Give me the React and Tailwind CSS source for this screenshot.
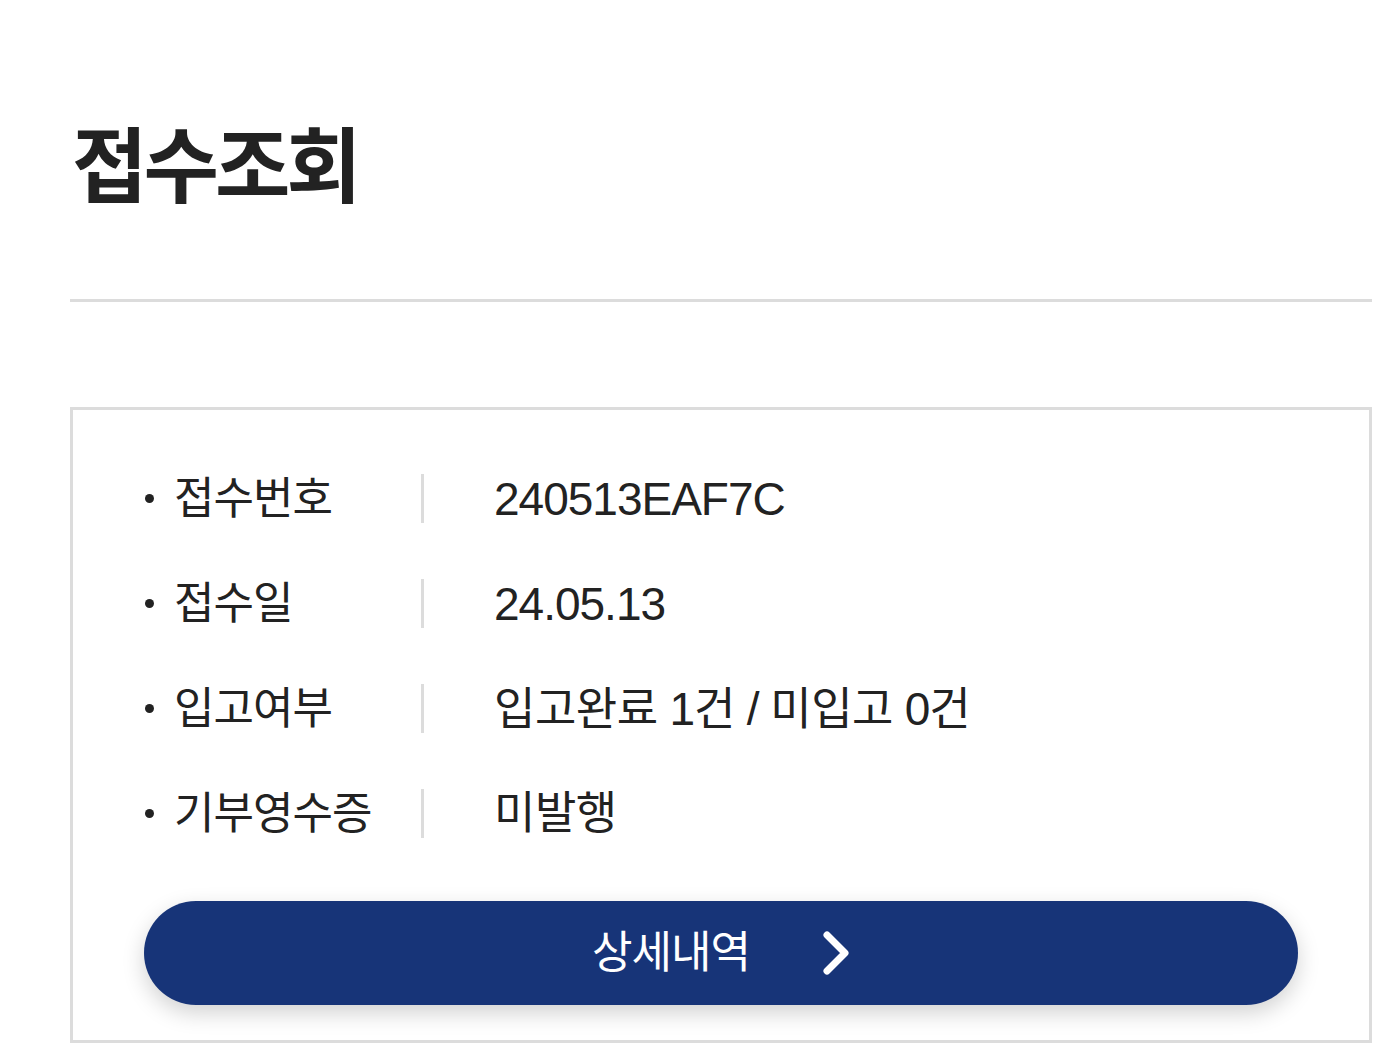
import React from 'react';

const KO = /([\u1100-\u11FF\u3130-\u318F\uAC00-\uD7AF]+)/;

// Hangul and latin parts get their own size so both match the picture
const Mixed = ({ text }) => (
  <span className="flex items-baseline">
    {text.split(KO).filter(Boolean).map((part, i) =>
      KO.test(part) ? (
        <span key={i} className="text-[45px] tracking-[-0.5px]">{part}</span>
      ) : (
        <span key={i} className="text-[46px] tracking-[-1px] whitespace-pre">{part}</span>
      )
    )}
  </span>
);

const rows = [
  { label: '접수번호', value: '240513EAF7C' },
  { label: '접수일', value: '24.05.13' },
  { label: '입고여부', value: '입고완료 1건 / 미입고 0건' },
  { label: '기부영수증', value: '미발행' },
];

const InfoRow = ({ label, value }) => (
  <div className="flex items-center h-[105px] leading-none text-[#222]">
    <span className="ml-px w-[9px] h-[9px] rounded-full bg-[#222]" />
    <span className="ml-[20px] w-[247px] text-[44px] tracking-[-1px]">{label}</span>
    <span className="w-[3px] h-[49px] bg-[#dcdcdc]" />
    <div className="ml-[70px]">
      <Mixed text={value} />
    </div>
  </div>
);

const App = () => {
  return (
    <div
      className="min-h-screen bg-white pb-[21px]"
      style={{ fontFamily: '"Liberation Sans", "Noto Sans CJK KR", sans-serif' }}
    >
      <div className="ml-[70px] w-[1302px]">
        <div className="pt-[84px] mb-[47px] h-[252px] flex items-center">
          <h1 className="ml-[2px] text-[82px] font-bold tracking-[-4px] leading-none text-[#222]">접수조회</h1>
        </div>
        <div className="h-[3px] bg-[#dcdcdc]" />

        <div className="mt-[105px] border-[3px] border-[#dcdcdc] px-[71px] pt-[36px] pb-[35px]">
          {rows.map((r) => (
            <InfoRow key={r.label} label={r.label} value={r.value} />
          ))}

          <button className="mt-[35px] w-full h-[104px] rounded-full bg-[#173478] shadow-[0_8px_22px_rgba(0,0,0,0.18)] flex items-center justify-center gap-[72px] text-white">
            <span className="text-[44px] tracking-[-1px] leading-none">상세내역</span>
            <svg width="28" height="46" viewBox="0 0 28 46" fill="none">
              <path d="M5 5 L23 23 L5 41" stroke="white" strokeWidth="7" strokeLinecap="round" strokeLinejoin="round" />
            </svg>
          </button>
        </div>
      </div>
    </div>
  );
};

export default App;
